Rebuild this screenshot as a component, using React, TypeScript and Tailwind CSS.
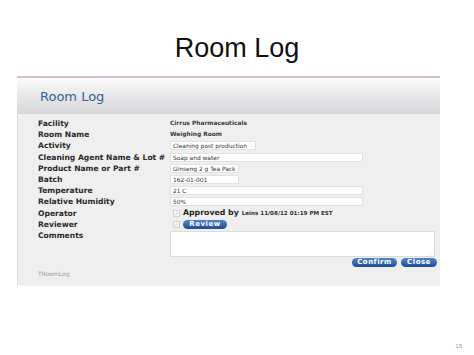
import React from "react";

const rows: { label: string; kind: "text" | "input" | "operator" | "reviewer" | "comments"; value?: string; width?: string }[] = [
  { label: "Facility", kind: "text", value: "Cirrus Pharmaceuticals" },
  { label: "Room Name", kind: "text", value: "Weighing Room" },
  { label: "Activity", kind: "input", value: "Cleaning post production", width: "w-[86px]" },
  { label: "Cleaning Agent Name & Lot #", kind: "input", value: "Soap and water", width: "w-[193px]" },
  { label: "Product Name or Part #", kind: "input", value: "Ginseng 2 g Tea Pack", width: "w-[69px]" },
  { label: "Batch", kind: "input", value: "162-01-001", width: "w-[69px]" },
  { label: "Temperature", kind: "input", value: "21 C", width: "w-[193px]" },
  { label: "Relative Humidity", kind: "input", value: "50%", width: "w-[193px]" },
  { label: "Operator", kind: "operator" },
  { label: "Reviewer", kind: "reviewer" },
  { label: "Comments", kind: "comments" },
];

const Pill = ({ children, className = "" }: { children: React.ReactNode; className?: string }) => (
  <span
    className={`inline-flex items-center justify-center h-[9px] rounded-full bg-gradient-to-b from-[#4f86c9] to-[#1e4e93] text-white text-[7px] font-bold leading-none tracking-[0.5px] ${className}`}
  >
    {children}
  </span>
);

const Check = () => (
  <span className="inline-block w-[7px] h-[7px] border border-[#d4d4d4] bg-[#f7f7f7] text-[6px] leading-[6px] text-[#c8c8c8] text-center">
    ✓
  </span>
);

export default function App() {
  return (
    <div className="w-[474px] h-[355px] bg-white relative overflow-hidden font-['DejaVu_Sans',sans-serif]">
      <h1 className="pt-[32px] text-center font-['Liberation_Sans',sans-serif] text-[27px] leading-[32px] text-[#111]">
        Room Log
      </h1>
      <div className="mt-[12px] ml-[17px] w-[423px] border-t-2 border-[#d3c3c3]">
        <div className="h-[36px] bg-gradient-to-b from-[#fbfbfb] to-[#d6d6d9] flex items-center pl-[23px]">
          <span className="text-[13px] text-[#336197] pt-[2px]">Room Log</span>
        </div>
        <div className="bg-[#efefef] border-l border-[#dcdcdc] h-[172px] pt-[4px] pl-[20px]">
          <div className="flex flex-col">
            {rows.map((r) => (
              <div key={r.label} className="flex items-start min-h-[11.2px]">
                <div className="w-[132px] shrink-0 text-[7.6px] leading-[11.2px] font-bold text-[#2a2a2a] whitespace-nowrap">
                  {r.label}
                </div>
                {r.kind === "text" && (
                  <div className="text-[5.9px] leading-[11.2px] font-bold text-[#3a3a3a]">{r.value}</div>
                )}
                {r.kind === "input" && (
                  <div
                    className={`${r.width} h-[9px] mt-[1px] bg-white border border-[#e2e2e2] text-[5.9px] leading-[8px] pl-[2px] text-[#333] whitespace-nowrap overflow-hidden`}
                  >
                    {r.value}
                  </div>
                )}
                {r.kind === "operator" && (
                  <div className="flex items-center h-[11.2px] pl-[3px] gap-[3px]">
                    <Check />
                    <span className="text-[7.8px] font-bold text-[#2a2a2a]">Approved by</span>
                    <span className="text-[5.6px] font-bold text-[#333]">Leins 11/08/12 01:19 PM EST</span>
                  </div>
                )}
                {r.kind === "reviewer" && (
                  <div className="flex items-center h-[11.2px] pl-[3px] gap-[3px]">
                    <Check />
                    <Pill className="w-[44px]">Review</Pill>
                  </div>
                )}
                {r.kind === "comments" && (
                  <div className="flex flex-col items-end">
                    <div className="w-[265px] h-[26px] mt-[1px] bg-white border border-[#dcdcdc] relative">
                      <span className="absolute right-[1px] bottom-0 text-[5px] leading-none text-[#bbb]">⋰</span>
                    </div>
                    <div className="flex gap-[4px] mt-[1px] mr-[-2px]">
                      <Pill className="w-[45px]">Confirm</Pill>
                      <Pill className="w-[36px]">Close</Pill>
                    </div>
                  </div>
                )}
              </div>
            ))}
          </div>
          <div className="mt-[2px] text-[6px] text-[#9a9a9a]">TRoomLog</div>
        </div>
      </div>
      <div className="absolute right-[12px] bottom-[4px] text-[6px] text-[#999] font-['Liberation_Sans',sans-serif]">15</div>
    </div>
  );
}
